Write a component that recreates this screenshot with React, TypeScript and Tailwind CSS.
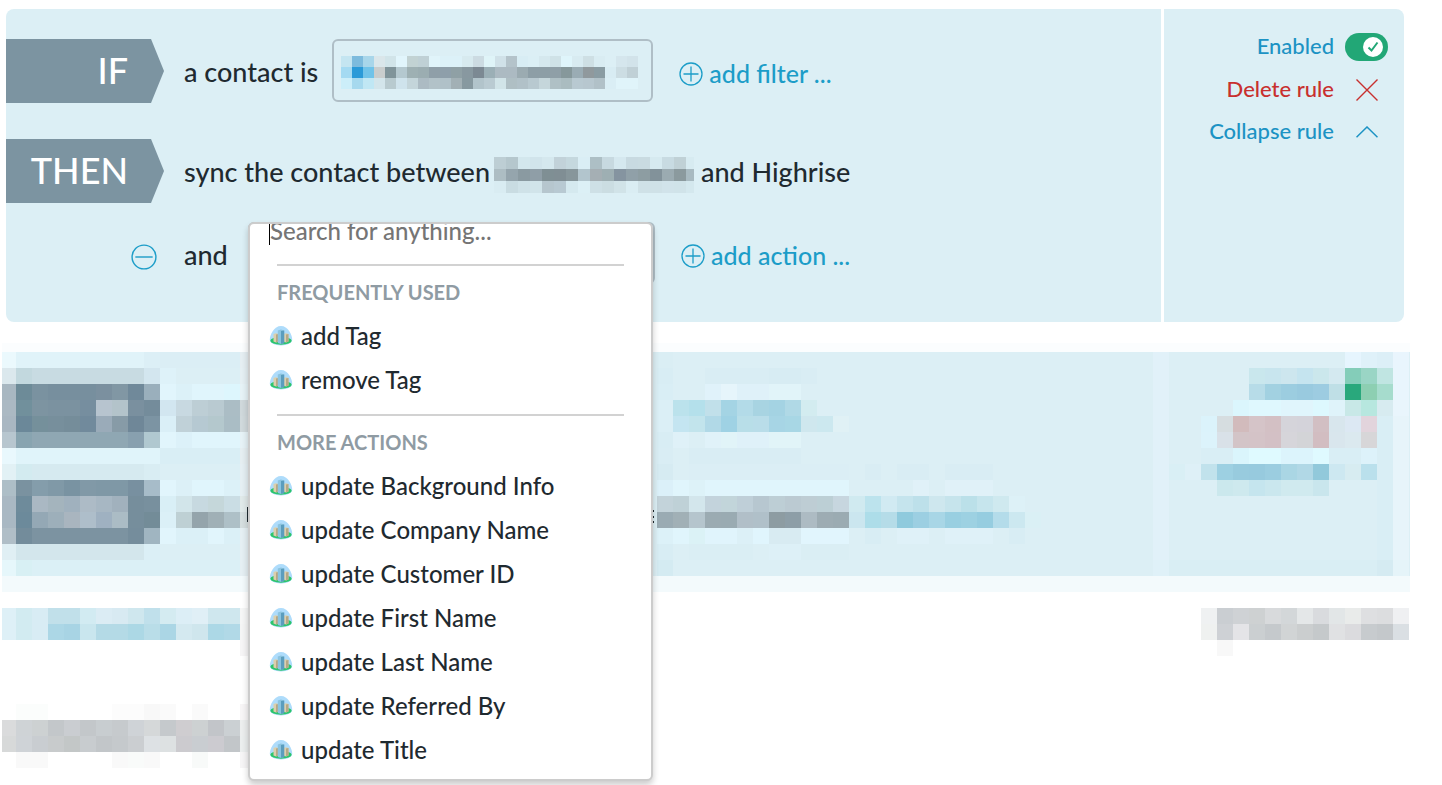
import type { ReactNode } from "react";

// One string per row, one hex colour per cell. "abc123*4" repeats a cell, "-" leaves it empty.
const SELECTED_EVENT = [
  "c4e5f1 7dbbdd a8d6ea dae6ea d1e4e9 e1f5fc c2d2d3 bfd0d5 e0f4fa dcf1f8*2 d7eaef ccdbe2 dff4f8 d0e1e8 b4c3ca d8edf4 dbeff5 d5e8ee cfe2e7 dff5fb d8ebf1 cedfe4 d9ecf2 - d5e6ed d2e3ea",
  "a4daf2 2a9ad8 70c3e9 c9cdcd 80949a b4c8cf 9eb0b3 9badb1 8f9fa8 8e9faa 8fa0a5 8898a0 7c8993 9bafb6 acbac2*2 9babb1 8d9ea6*2 8f9fa7 86989b 9aacb4 90999d 8a9ca3 d8ecf3 ccdde3 c0d0d6",
  "cceef9 a6d9ee c0e7f4 d3e5eb b8cacf cfe3ec c4d5da acbbc3 b2c2c8 b0c1c8 a2b0b5 8799a0 b2c4cb bacbd2 d1e4e8 afbfc4 b1c1c8 b8c9d0 c5d6db afc0c5 aabcc0 b8c9d1 b7c7cf b1c1c8 daeef5 e0f4fa*2",
];

const CONNECTED_APP = [
  "bdced4 b5c7cd d3e7ed d1e4eb d5e8ee c2d2d9 c5d8de daeef5 adbfc5 c7d9e0 d5e8ef c8dae1 c9dbe1 d6eaf0 c8dbe2 c0d1d6 d7ebf1",
  "adbdc3 95a5ad 8a9aa1 8f9ea7 7f8f94 808e94 87969b b2c5cd a5afb4 9eafb3 8594a0 90a0a8 8d9da2 82929a 9babb1 8b9a9e a8bac1",
  "d9ecf2 c9dce2 cfe2e8 d1e4ea b6c6ce b8c9d2 d5e9ef dcf0f6 cee0e6 cbdde2 d1e3e8 daedf3 cfe1e7 cfe1e7 d1e3ea d0e3e9 d4e8ee",
];

const RULE_LABELS = [
  "ebf9fd e0f3f9*8 dceff6 dbeef5*5 e5eef2",
  "dbe8ed c2d8de c8dbe2*7 d3e6ef def2f9 -*4 e5eff3",
  "a8b7c1 6d8b98 7a92a0 778f9e*3 7b909f 8197a4 70899a 9aafbc e1f5fc dcf1f8 e0f5fc*2 ddf6fd e6f2f6",
  "abb9c3 71909c 7d94a1 7b92a0*2 768e9f b7c4cf b3c3ca 7a909f 748c9b d2e6f0 c8d9e1 bdced5 b9cad1 abbdc5 cfd8db",
  "a9b7c2 6b8899 75909b 778f9c 758d9a 718a9c 9aabb9 879ba7 6f8798 7c94a3 daeff7 c0d1d8 b6c9d2 b4c8cd aabdc5 d0d9dc",
  "b7c6cf 88a4b0 8fa7b3*6 88a0af b0c8d0 e1f5fc dcf1f9 e0f5fc*3 e6f2f6",
  "e9f8fd e0f4fa*9 d9eef5*5 e5eef1",
  "e2f1f5 d3ebf0 d6eaf0*7 d9edf3 -*5 e5eff3",
  "adbec7 7a92a0 849dab 8099a7 7993a2 8199a7 7f98a6*2 7890a0 a7bcc9 e1f5fc dcf0f7 e0f5fc*2 dcf1f8 e5eff3",
  "a9b8c3 6e8b9b aab8c3 a4b4bd a0b1be adbbc6 a7b7c3 a1b1bd 768e9c 78909e d9eff6 d2e5ea c7d9e0 c5d7da cadde4 e0e9e9",
  "a9b8c3 6c8a9b 94a8b5 9dafba a9b5bf aebeca 9fb1c1 abbcc5 768e9c 738c98 dbf0f7 bed0d4 94a4ab a0b0b6 aec0c7 d5dedf",
  "b0bec7 738c9b 7c93a1*6 758d9c a0b5c1 e1f5fc dbf0f7*2 e1f5fc dbf0f7 e5eff3",
  "e0eff4 d3e6ec*8 dbeff6 -*5 e5eff3",
  "e6f7fb d8f0f4 dbf0f6*13 e5eff3",
];

const RULE_BODY = [
  "daeef4 -*23",
  "d8edf4 -*2 d9edf4*4 d7ecf3*2 d9edf4",
  "d9eef5 -*2 e0f2fa e6f5fb dff1f9*2 e1f4f9*2",
  "dbeff6 bbe2ec b4e0eb c1e0ea a4d4e4 b3dbe8 a8d4e2 a4d3e3 b0d9e6 d3ecf0",
  "dbeff6 c4e5f1 c2e4ec b1d9e7 9fd2e4 b8dee8 b9dde9 a7d5e5 a8d7e5 cfe7ee cce8ef e0f1f5",
  "d8edf4 dff1f8 - e0f2f9 e1f4f8 dff1f9*2 e1f4f8*2",
  "d9edf4 - d9edf4*7",
  "d6ebf2 - dbeef5*10 - d9edf4 - d9edf4*2 - d9edf4*3",
  "dbf0f9 e0f5fc ddf2f8 e0f5fc*9 -*4 e0f1f8 - e0f1f8*3",
  "c3d3da bfd1d7 d3e6ec c3d3dc c2d5da bfcfd8 b7c7d0 bdced5 bbcad2 becdd4 bccfd5 c7d6df d0eaf0 bce3ed d1eaf2 c5e4ed bde0ea cee7ee c6e4ec bbe0e9 c6e5ed cfe9ef ddf1f7",
  "9aabb3 a1b0b6 b5c5cd 9babb2 9aabb2 b1bfc8 b0c0c9 8d9ca2 8d9ea7 adbbc3 9dacb3 9babb2 cbe6ef addde9 b5dce8 8fcadd 9ccfe2 a8d6e6 99cfe1 9dd1e2 96cde0 b4dcea cce8f0 daf0f5",
  "dcf1f8 e0f5fc dbf2f6 e0f4fc*2 dcf0f7 e0f5fd d8ebf2*2 e1f5fd*3 - d8edf4 - dff1f8*2 - dff1f8*3 - d8edf4",
  "d8edf4 - daeef4*4 - ddf0f7*2 daeef4*3",
  "d4ebf2 -*23",
];

const RULE_CONTROLS = [
  "e1f1f9 -*11 e6f5fe dff1f9 dceff7 e9f5fd",
  "e1f1f9 -*5 c9e7ed c8e5ee cde6ee c5e4ef cbe7ec d4e9f0 84cdb9 9ad5c5 c0e5e2 e9f5fd",
  "e1f1f9 -*5 b7dce8 a2d1e1 9ccde0 99cadf 9dcce1 bfdfe6 29a87c 8dcfb2 a6dccd e9f5fd",
  "e1f1f9 -*4 dbf6fd dff8fe*2 e0f5fc*2 ddf8fe dff3fa c8e8e7 b7e7df d7ebf0 e9f5fc",
  "e1f1f9 -*2 dbf3fb d6dde0 d2bbbc d5c4c8 d3c0c4 d5d4da d4d3da d2bfc3 d8e6ed dce8f3 e2d4dc d9eef5 e7f4fa",
  "e1f1f9 -*2 dcf3fb d9e1e8 d3c4c7 d4c3c7 d3c0c5 d6d5da d3d4d7 d2bdc1 d9e6ed dbe9ef d7d6d8 d9eef5 e7f4fa",
  "e1f1f9 -*2 d9eef5*2 daf5fc dffaff*2 dcf4fc*2 dffaff d9eef5*2 ddf2fa d9eef5 e7f4fa",
  "e1f1f9 d9eff5 def0f7 c1e2ec 9dd0e2 98cbde 97cade 9bcde0 aad6e4 b1d8e6 92c9db cde8f1 d7ecf1 bae0ec d9eef5 e7f4fa",
  "e1f1f9 -*3 cbe8ed cee9ee c5e5ee cae7ee d0eaef*2 c9e6ed -*3 d9eef5 e7f4fa",
  "e1f1f9 -*13 d9eef5 e7f4fa",
  "e1f1f9 -*13 d9eef5 e7f4fa",
  "e1f1f9 -*13 d9eef5 e7f4fa",
  "e1f1f9 -*13 d9eef5 e7f4fa",
  "dff1f8 d9eef4*13 d5ebf2 e5f4f9",
];

const FOOTER_LINK = [
  "def0f7 d2ebf1 d8ecf4 c1e0ea*2 d2ebf2 dbecf4 d8eaf2 cfe7ee c0e0eb d4ebf1 dceef6 e0eff6 cfe7ee*2 f5f6f6",
  "def0f7 d2ebf1 d8ecf4 acd7e6 a8d4e4 c9e6ee b4dae6*2 acd8e5 b9dde8 abd6e5 d4e9f0 cfe6ed acd8e6 b1d9e7 f4f5f5",
  "-*15 f6f5f6",
];

const FOOTER_STATUS = [
  "eff1f2 caced2 cfd2d5 ced1d2 d8dadc d3d7d9 e4e7e8 d9dbde e2e6e7 e9ebea dedfe1 dcdddf eff0f2",
  "eff1f0 ced1d5 e4e4e7 cbcfd1 c5c9cc d1d4d5 cbcecf c5c9cb e0e1e3 dbdbde c7cbce c4c8cb dadfe3",
  "- f8f8f8",
];

const FOOTER_NOTE = [
  "- fbfdfc*2 -*4 fcfcfc*2 f8f8f8 fafafa - fafafa -*2 f7f5f6",
  "dadbdc cfd3d6 cdd1d2 c3c7ca cacdd1 c3c7ca c8cdd0 c6cacd cfd3d7 d5d8d9 c5c9cc cfcdd0 cdd1d2 c2c5c9 cbd0d3 eceeee",
  "d7d9d9 cfd3d7 c9cdd1 c8cbcc c3c7c7 c8cccf c2c6c9 c5c9cc cbced1 dde1e4 dde1e2 cccbcf c9cdd1 cccbd0 c2c6c9 ebeeee",
  "- f9f9f9*2 -*4 f9f9f9 f9fbfa f9f9f9 -*2 f8faf9 -*2 f6f5f6",
];

type MosaicProps = {
  rows: string[];
  width: number;
  cell?: number;
  x?: number;
  children?: ReactNode;
};

function Mosaic({ rows, width, cell = 16, x = 0, children }: MosaicProps) {
  const height = rows.length * cell;
  return (
    <svg
      width={width}
      height={height}
      viewBox={`${x} 0 ${width} ${height}`}
      shapeRendering="crispEdges"
      className="block shrink-0"
      aria-hidden="true"
    >
      {rows.map((row, r) => {
        let col = 0;
        return row.split(" ").map((token, i) => {
          const [color, count = "1"] = token.split("*");
          const start = col;
          col += Number(count);
          if (color === "-") return null;
          return (
            <rect
              key={`${r}-${i}`}
              x={start * cell}
              y={r * cell}
              width={Number(count) * cell}
              height={cell}
              fill={`#${color}`}
            />
          );
        });
      })}
      {children}
    </svg>
  );
}

function CircleIcon({ plus, size }: { plus?: boolean; size: number }) {
  return (
    <svg
      width={size}
      height={size}
      viewBox="0 0 24 24"
      fill="none"
      stroke="#1c9dc8"
      strokeWidth="1.3"
      className="shrink-0"
      aria-hidden="true"
    >
      <circle cx="12" cy="12" r="11" />
      <path d={plus ? "M4.5 12h15M12 4.5v15" : "M4 12h16"} />
    </svg>
  );
}

function CityIcon() {
  return (
    <svg
      width="24"
      height="22"
      viewBox="0 0 24 22"
      className="shrink-0"
      aria-hidden="true"
    >
      <path
        d="M12 1c3.500 0 6.200 2 8.200 5 1.900 2.900 3 6 3 8.500 0 3.800-5 5.900-11.200 5.900S.8 18.300.8 14.500C.8 12 1.900 8.900 3.800 6 5.800 3 8.500 1 12 1Z"
        fill="#aedcfb"
      />
      <ellipse cx="12" cy="15.800" rx="10.700" ry="3.900" fill="#2bc56c" />
      <path d="M4.500 9l2.500-.8L9.500 9v7.500L7 17.500l-2.500-1Z" fill="#dccfac" />
      <path d="M7 9.500L9.500 9v7.500L7 17.500Z" fill="#b5a887" />
      <path d="M14.500 9l2.500-.8 2.500.8v7.500l-2.500 1-2.500-1Z" fill="#dccfac" />
      <path d="M17 9.500l2.500-.5v7.500l-2.500 1Z" fill="#b5a887" />
      <path d="M8.800 5.500L12 4.500l3.200 1V18L12 19l-3.200-1Z" fill="#8cc4df" />
      <path d="M12 6l3.200-.5V18L12 19Z" fill="#5b9dbd" />
    </svg>
  );
}

function StepLabel({ children }: { children: string }) {
  return (
    <div className="flex h-16 w-[158px] shrink-0 items-center justify-end bg-[#7c94a1] pr-9 pb-[2px] text-[36px] leading-none font-medium text-white [clip-path:polygon(0_0,145px_0,100%_50%,145px_100%,0_100%)]">
      {children}
    </div>
  );
}

function AddButton({ children }: { children: string }) {
  return (
    <button
      type="button"
      className="ml-[26px] flex items-center gap-[6px] pt-[5px] text-[25px] whitespace-nowrap text-[#1c9dc8]"
    >
      <CircleIcon plus size={24} />
      {children}
    </button>
  );
}

function MenuGroup({ title, items }: { title: string; items: string[] }) {
  return (
    <section>
      <hr className="mr-[27px] ml-[27px] border-t-2 border-[#d2d2d2]" />
      <h2 className="flex h-12 items-center pt-1 pl-[27px] text-[20px] font-bold text-[#8f9ba3]">
        {title}
      </h2>
      <ul className="pb-px">
        {items.map((item) => (
          <li key={item}>
            <button
              type="button"
              className="flex h-11 w-full items-center gap-2 pl-[19px] text-left text-[24px] whitespace-nowrap text-[#1f2a30]"
            >
              <CityIcon />
              {item}
            </button>
          </li>
        ))}
      </ul>
    </section>
  );
}

function ActionMenu() {
  return (
    <div className="absolute top-0 left-0 z-10 flex w-[405px] flex-col gap-[11px] overflow-hidden rounded-md border-2 border-[#cccccc] bg-white pb-[6px] font-medium shadow-[0_4px_6px_rgba(0,0,0,0.2)]">
      <div className="-mt-[14px] -mb-[11px] flex h-[54px] items-start pl-[19px]">
        <span className="mt-[6px] h-[29px] w-px shrink-0 bg-black" />
        <input
          type="text"
          aria-label="Search actions"
          placeholder="Search for anything..."
          className="h-10 w-full bg-transparent text-[24px] outline-none placeholder:text-[#757575]"
        />
      </div>
      <MenuGroup title="FREQUENTLY USED" items={["add Tag", "remove Tag"]} />
      <MenuGroup
        title="MORE ACTIONS"
        items={[
          "update Background Info",
          "update Company Name",
          "update Customer ID",
          "update First Name",
          "update Last Name",
          "update Referred By",
          "update Title",
        ]}
      />
    </div>
  );
}

function RuleControls() {
  return (
    <aside className="flex w-60 shrink-0 flex-col items-end rounded-r-lg bg-[#dceff5] pt-[17px] pr-4 text-[22px] font-medium text-[#1c93c4]">
      <label className="flex h-[42px] cursor-pointer items-center gap-[11px]">
        <span className="pb-[3px]">Enabled</span>
        <input type="checkbox" defaultChecked className="peer sr-only" />
        <span className="flex h-7 w-[43px] items-center justify-end rounded-full bg-[#22a776] pr-[5px]">
          <span className="flex size-5 items-center justify-center rounded-full bg-white">
            <svg
              width="12"
              height="12"
              viewBox="0 0 12 12"
              fill="none"
              stroke="#22a776"
              strokeWidth="2"
            >
              <path d="M1.500 6.500l3 3 6-8" />
            </svg>
          </span>
        </span>
      </label>
      <button
        type="button"
        className="flex h-[43px] items-center gap-[11px] text-[#c8302e]"
      >
        <span className="pb-[3px]">Delete rule</span>
        <span className="flex w-[43px] justify-center">
          <svg
            width="22"
            height="22"
            viewBox="0 0 22 22"
            stroke="currentColor"
            strokeWidth="1.4"
          >
            <path d="M.5.5l21 21M21.500.5l-21 21" />
          </svg>
        </span>
      </button>
      <button type="button" className="flex h-[42px] items-center gap-[11px]">
        <span className="pb-[3px]">Collapse rule</span>
        <span className="flex w-[43px] justify-center">
          <svg
            width="22"
            height="12"
            viewBox="0 0 22 12"
            fill="none"
            stroke="currentColor"
            strokeWidth="1.5"
          >
            <path d="M.5 11.300L11 1l10.500 10.300" />
          </svg>
        </span>
      </button>
    </aside>
  );
}

export default function App() {
  return (
    <main className="min-h-screen bg-white pt-[9px] font-['Lato',sans-serif] text-[#1f2a30]">
      <div className="mr-[38px] ml-[6px] flex gap-[3px]">
        <div className="grow rounded-l-lg bg-[#dceff5] pt-[30px] pb-[38px] text-[27px] font-medium">
          <div className="flex h-16 items-center whitespace-nowrap">
            <StepLabel>IF</StepLabel>
            <span className="ml-5 pt-[3px]">a contact is</span>
            <button
              type="button"
              aria-label="Choose event"
              className="ml-[14px] flex h-[63px] w-[321px] items-center self-start rounded-md border-2 border-[#afbec6] pt-1 pl-[7px]"
            >
              <Mosaic rows={SELECTED_EVENT} width={297} cell={11} />
            </button>
            <AddButton>add filter ...</AddButton>
          </div>

          <div className="mt-9 flex h-16 items-center whitespace-nowrap">
            <StepLabel>THEN</StepLabel>
            <span className="mr-1 ml-5 pt-[3px]">sync the contact between</span>
            <div className="pt-2">
              <Mosaic rows={CONNECTED_APP} width={200} cell={12} />
            </div>
            <span className="ml-[7px] pt-[3px]">and Highrise</span>
          </div>

          <div className="mt-[19px] flex items-center whitespace-nowrap">
            <div className="flex w-[158px] shrink-0 justify-end pt-2 pr-[7px]">
              <button type="button" aria-label="Remove action">
                <CircleIcon size={26} />
              </button>
            </div>
            <span className="ml-5 w-16 pt-[5px]">and</span>
            <div className="relative">
              <button
                type="button"
                aria-label="Choose action"
                className="block h-[62px] w-[407px] rounded-md border-2 border-[#afbec6]"
              />
              <ActionMenu />
            </div>
            <AddButton>add action ...</AddButton>
          </div>
        </div>
        <RuleControls />
      </div>

      <div className="mt-[21px] mr-8 ml-[2px] flex border-t-[9px] border-b-[16px] border-t-[#fbfdfe] border-b-[#f3fafc] bg-[#dceff5]">
        <Mosaic rows={RULE_LABELS} width={254} x={2}>
          <rect x="247" y="155" width="1" height="15" fill="#1f2a30" />
        </Mosaic>
        <div className="w-[397px] shrink-0" />
        <Mosaic rows={RULE_BODY} width={388} x={-4}>
          <path d="M-4 158h1v2h-1zM-4 164h1v2h-1zM-4 169h1v2h-1z" fill="#1f2a30" />
        </Mosaic>
        <div className="grow" />
        <Mosaic rows={RULE_CONTROLS} width={257} />
      </div>

      <footer className="mt-4 mr-8 ml-[2px]">
        <div className="flex justify-between">
          <Mosaic rows={FOOTER_LINK} width={254} x={2} />
          <Mosaic rows={FOOTER_STATUS} width={209} />
        </div>
        <div className="mt-12">
          <Mosaic rows={FOOTER_NOTE} width={254} x={2} />
        </div>
      </footer>
    </main>
  );
}
